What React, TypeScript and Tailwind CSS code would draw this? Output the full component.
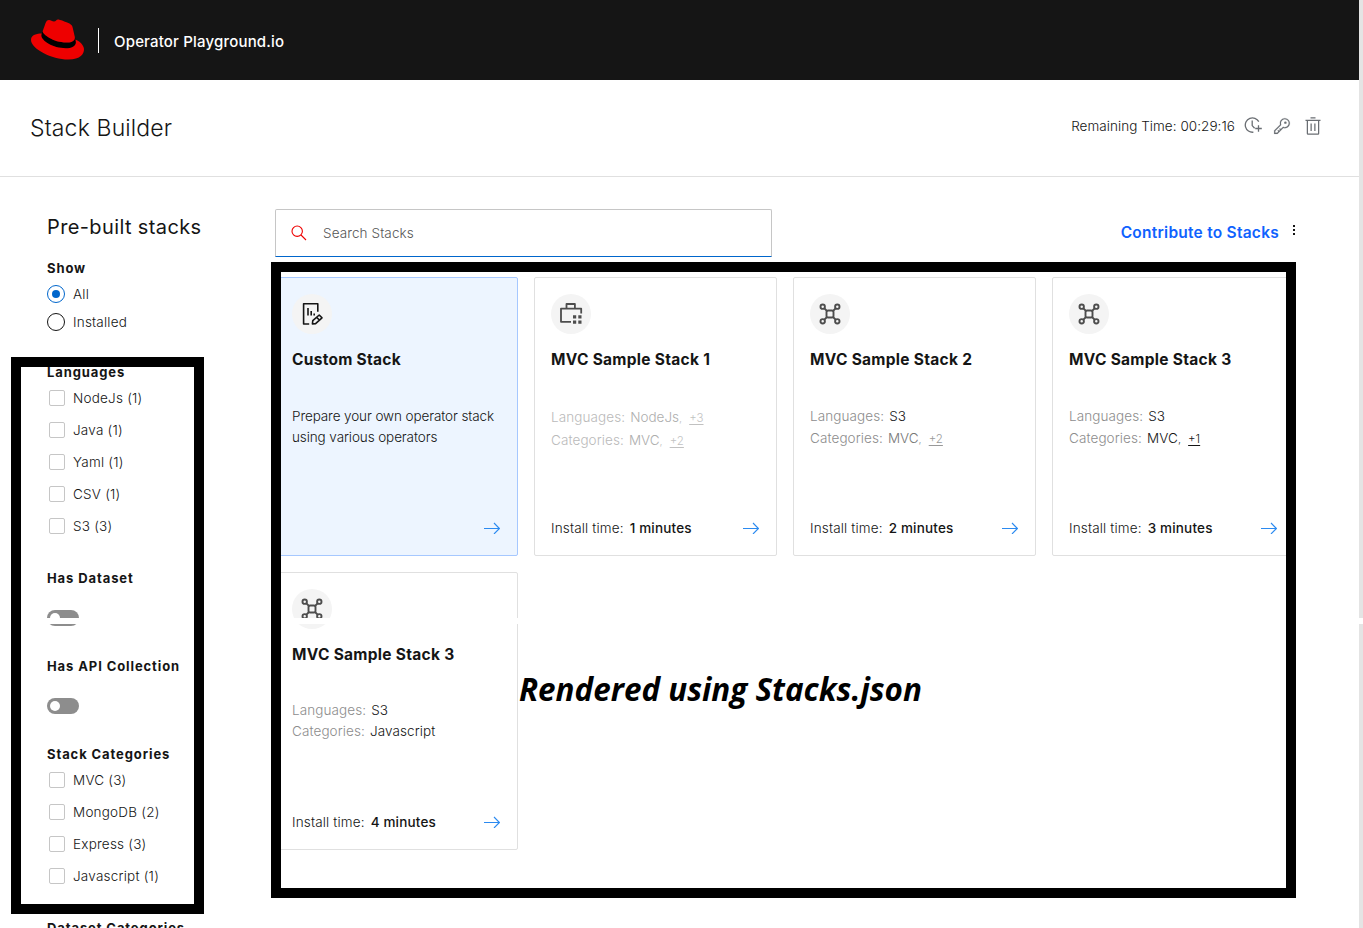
import React from "react";

const languages = ["NodeJs (1)", "Java (1)", "Yaml (1)", "CSV (1)", "S3 (3)"];
const categories = ["MVC (3)", "MongoDB (2)", "Express (3)", "Javascript (1)"];

function RedHat() {
  return (
    <svg className="h-[53px] w-[53px]" viewBox="0 0 24 24">
      <path
        fill="#000"
        d="M20.11 11.951c.218 1.032.218 1.14.218 1.277 0 1.765-1.984 2.745-4.593 2.745-5.895.004-11.06-3.451-11.06-5.734a2.326 2.326 0 0 1 .19-.925l.46-1.15a.81.81 0 0 0-.028.245c0 1.162 4.577 4.974 10.71 4.974 1.577 0 3.86-.326 3.86-2.202a1.765 1.765 0 0 0-.04-.431z"
      />
      <path
        fill="#e00"
        d="M16.009 13.386c1.577 0 3.86-.326 3.86-2.202a1.765 1.765 0 0 0-.04-.431l-.94-4.08c-.216-.898-.406-1.305-1.982-2.093-1.223-.625-3.888-1.658-4.676-1.658-.733 0-.947.946-1.822.946-.842 0-1.467-.706-2.255-.706-.757 0-1.25.515-1.63 1.576 0 0-1.06 2.99-1.197 3.424a.81.81 0 0 0-.028.245c0 1.162 4.577 4.974 10.71 4.974m4.101-1.435c.218 1.032.218 1.14.218 1.277 0 1.765-1.984 2.745-4.593 2.745-5.895.004-11.06-3.451-11.06-5.734a2.326 2.326 0 0 1 .19-.925C2.746 9.415 0 9.794 0 12.217c0 3.969 9.405 8.861 16.851 8.861 5.71 0 7.149-2.582 7.149-4.62 0-1.605-1.387-3.425-3.887-4.512"
      />
    </svg>
  );
}

function ClockPlus() {
  return (
    <svg className="size-[18px]" viewBox="0 0 18 18" fill="none" stroke="#6a6e73" strokeWidth="1.3">
      <path d="M14.8 4.6A7.2 7.2 0 1 0 9.4 15.2M8.2 3.6v5l2.4 2.6M14.5 8.2v6.6M11.2 11.5h6.6" />
    </svg>
  );
}

function Key() {
  return (
    <svg className="size-[18px]" viewBox="0 0 32 32" fill="#6a6e73">
      <path
        stroke="#6a6e73"
        strokeWidth="0.3"
        d="M21 2a8.998 8.998 0 0 0-8.612 11.612L2 24v6h6l10.388-10.388A9 9 0 1 0 21 2zm0 16a7.013 7.013 0 0 1-2.032-.302l-1.147-.348-.847.847-3.181 3.181L12.414 20 11 21.414l1.379 1.379-1.586 1.586L9.414 23 8 24.414l1.379 1.379L7.172 28H4v-3.172l9.802-9.802.848-.847-.348-1.147A7 7 0 1 1 21 18z"
      />
      <circle cx="22" cy="10" r="2.2" />
    </svg>
  );
}

function Trash() {
  return (
    <svg className="size-5" viewBox="0 0 32 32" fill="#6a6e73">
      <path d="M12 12h2v12h-2zM18 12h2v12h-2zM4 6v2h2v20a2 2 0 0 0 2 2h16a2 2 0 0 0 2-2V8h2V6zm4 22V8h16v20zM12 2h8v2h-8z" />
    </svg>
  );
}

function Arrow() {
  return (
    <svg className="mr-px h-3 w-4" viewBox="0 0 16 12" fill="none" stroke="#2b8af0" strokeWidth="1.1">
      <path d="M0 6.5h15.3M10 1l5.4 5.5L10 12" />
    </svg>
  );
}

function EditIcon() {
  return (
    <svg className="size-6" viewBox="0 0 24 24" fill="none" stroke="#151515" strokeWidth="1.6">
      <path d="M17.8 9.8V1.8H3.6v20.2h5.6" strokeLinejoin="round" />
      <path d="M8 6v7.4M11.2 9v4.4M14.2 11.4v2" />
      <path d="m12.4 22 .4-3.4 6.4-5.6 2.8 2.8-6.4 5.8zM16.6 15.4l2.8 2.6" strokeLinejoin="round" />
    </svg>
  );
}

function CaseIcon() {
  return (
    <svg className="size-6" viewBox="0 0 24 24" fill="none" stroke="#4d4d4d" strokeWidth="1.8">
      <path d="M12 19.8H2V6.6h20.2v4.9M7.5 6.6V2h8.4v4.6" strokeLinejoin="round" />
      <path fill="#4d4d4d" stroke="none" d="M14 13.3h3.2v3.2H14zM19.3 13.3h3.2v3.2h-3.2zM14 18.6h3.2v3.2H14zM19.3 18.6h3.2v3.2h-3.2z" />
    </svg>
  );
}

function HubIcon() {
  return (
    <svg className="size-6" viewBox="0 0 24 24" fill="none" stroke="#4d4d4d" strokeWidth="1.9">
      <rect x="8.5" y="8.5" width="7" height="7" rx="1.8" />
      <circle cx="4.7" cy="4.7" r="2.2" />
      <circle cx="19.3" cy="4.7" r="2.2" />
      <circle cx="4.7" cy="19.3" r="2.2" />
      <circle cx="19.3" cy="19.3" r="2.2" />
      <path d="m6.4 6.4 2.6 2.6M17.6 6.4 15 9M6.4 17.6 9 15M17.6 17.6 15 15" />
    </svg>
  );
}

function Heading({ children }: { children: React.ReactNode }) {
  return <h3 className="h-5 text-[13px] leading-5 font-bold tracking-[0.9px] whitespace-nowrap text-[#151515]">{children}</h3>;
}

function CheckList({ items }: { items: string[] }) {
  return (
    <ul>
      {items.map((t) => (
        <li key={t} className="flex h-8 items-center gap-2 pl-[2px] text-[13.5px] font-light tracking-[0.22px] text-[#151515]">
          <span className="size-4 rounded-[2px] border border-[#c6c6c6] bg-white" />
          {t}
        </li>
      ))}
    </ul>
  );
}

function Toggle() {
  return (
    <div className="flex h-4 w-8 items-center rounded-full bg-[#8d8d8d] pl-[3px]">
      <span className="size-[10px] rounded-full bg-white" />
    </div>
  );
}

type Row = { value: string; more?: string; label: string; dim: boolean };

function Meta({ label, value, more, dim }: Row) {
  return (
    <div className="flex items-baseline gap-[5px] whitespace-nowrap">
      <span className="tracking-[0.1px] text-[#8d8d8d]">{label}</span>
      <span className={dim ? "text-[#777]" : "tracking-[0.1px] text-[#151515]"}>
        {value}
        {more && <span className={dim ? "text-[11px] text-[#999]" : "text-[11px] text-[#333]"}>,</span>}
      </span>
      {more && (
        <span className={dim ? "ml-[2px] text-[11.5px] text-[#999] underline underline-offset-2" : "ml-[2px] text-[11.5px] text-[#151515] underline underline-offset-2"}>
          {more}
        </span>
      )}
    </div>
  );
}

type CardProps = {
  title: string;
  icon: React.ReactNode;
  minutes?: string;
  selected?: boolean;
  rows?: Row[];
  bodyClass: string;
  sizeClass: string;
};

function Card({ title, icon, minutes, selected, rows, bodyClass, sizeClass }: CardProps) {
  return (
    <article
      className={`flex w-[243px] flex-col rounded-[2px] border px-4 pt-4 ${sizeClass} ${selected ? "border-[#a6c8ff] bg-[#edf5ff]" : "border-[#e0e0e0] bg-white"}`}
    >
      <div className="flex size-10 shrink-0 items-center justify-center rounded-full bg-[#f4f4f4]">{icon}</div>
      <h2 className="mt-4 h-5 text-[15.5px] leading-5 font-bold tracking-[0.28px] whitespace-nowrap text-[#151515]">{title}</h2>
      <div className={`flex-1 text-[13.5px] font-light ${bodyClass}`}>
        {rows ? rows.map((r) => <Meta key={r.label} {...r} />) : (
          <p className="tracking-[-0.1px] whitespace-nowrap text-[#151515]">
            Prepare your own operator stack
            <br />
            using various operators
          </p>
        )}
      </div>
      <div className="mb-[17px] flex h-5 items-center justify-between text-[13.5px] leading-5 text-[#151515]">
        <span className="flex gap-[6px] whitespace-nowrap">
          {minutes && (
            <>
              <span className="font-light tracking-[0.15px]">Install time:</span>
              <span className="font-medium tracking-[0.18px]">{minutes}</span>
            </>
          )}
        </span>
        <Arrow />
      </div>
    </article>
  );
}

export default function App() {
  return (
    <div className="relative flex h-[928px] w-[1363px] overflow-hidden bg-white font-['Inter','Liberation_Sans',sans-serif]">
      <div className="flex w-[1359px] flex-col">
        <header className="flex h-20 shrink-0 items-center bg-[#151515] pl-[31px]">
          <div className="-mt-[2px]">
            <RedHat />
          </div>
          <div className="mt-[1px] ml-[14px] h-[25px] w-px bg-white" />
          <span className="mt-[4px] ml-[15px] text-[15px] font-medium tracking-[0.18px] whitespace-nowrap text-white">Operator Playground.io</span>
        </header>
        <div className="flex h-[97px] shrink-0 items-center justify-between border-b border-[#e0e0e0] pr-[36px] pl-[30px]">
          <h1 className="text-[23px] font-light tracking-[0.15px] whitespace-nowrap text-[#151515]">Stack Builder</h1>
          <div className="-mt-[4px] flex items-center">
            <span className="mr-[9px] text-[13.5px] font-light tracking-[0.05px] whitespace-nowrap text-[#151515]">Remaining Time: 00:29:16</span>
            <ClockPlus />
            <span className="ml-[11px] flex">
              <Key />
            </span>
            <span className="ml-[12px] flex">
              <Trash />
            </span>
          </div>
        </div>
        <div className="flex">
          <aside className="w-[275px] shrink-0 pt-[37px] pl-[47px]">
            <h2 className="h-[26px] text-[20px] leading-[26px] font-normal tracking-[0.38px] whitespace-nowrap text-[#151515]">Pre-built stacks</h2>
            <div className="mt-[18px]">
              <Heading>Show</Heading>
            </div>
            <div className="mt-[2px] flex flex-col text-[13.5px] font-light tracking-[0.2px] text-[#151515]">
              <div className="flex h-7 items-center gap-2">
                <span className="flex size-[18px] items-center justify-center rounded-full border border-[#06c]">
                  <span className="size-2 rounded-full bg-[#06c]" />
                </span>
                All
              </div>
              <div className="flex h-7 items-center gap-2">
                <span className="size-[18px] rounded-full border border-[#151515]" />
                Installed
              </div>
            </div>
            <div className="mt-[26px]">
              <Heading>Languages</Heading>
            </div>
            <CheckList items={languages} />
            <div className="mt-[26px] mb-[22px]">
              <Heading>Has Dataset</Heading>
            </div>
            <Toggle />
            <div className="mt-[30px] mb-[22px]">
              <Heading>Has API Collection</Heading>
            </div>
            <Toggle />
            <div className="mt-[30px]">
              <Heading>Stack Categories</Heading>
            </div>
            <CheckList items={categories} />
            <div className="mt-[26px]">
              <Heading>Dataset Categories</Heading>
            </div>
          </aside>
          <main className="w-[1021px] shrink-0 pt-8">
            <div className="flex justify-between">
              <div className="flex h-12 w-[497px] items-center rounded-t-[2px] border border-[#c6c6c6] border-b-[#06c] pl-[15px]">
                <svg className="size-4" viewBox="0 0 16 16" fill="none" stroke="#e00" strokeWidth="1.1">
                  <circle cx="6.2" cy="6.2" r="5.2" />
                  <path d="m10 10 5 5" />
                </svg>
                <span className="ml-4 text-[13.5px] font-light tracking-[0.1px] text-[#555]">Search Stacks</span>
              </div>
              <div className="flex">
                <a className="mt-[14px] text-[15.5px] leading-5 font-semibold tracking-[0.25px] whitespace-nowrap text-[#0f62fe]">Contribute to Stacks</a>
                <div className="mt-4 mr-px ml-[14px] flex h-[10px] flex-col justify-between">
                  <span className="size-[2px] bg-[#151515]" />
                  <span className="size-[2px] bg-[#151515]" />
                  <span className="size-[2px] bg-[#151515]" />
                </div>
              </div>
            </div>
            <section className="mt-5 grid grid-cols-[repeat(4,243px)] gap-4">
              <Card title="Custom Stack" icon={<EditIcon />} selected bodyClass="mt-[36px] leading-[21px]" sizeClass="h-[279px]" />
              <Card
                title="MVC Sample Stack 1"
                icon={<CaseIcon />}
                minutes="1 minutes"
                bodyClass="mt-[36px] leading-[22px] opacity-60"
                sizeClass="h-[279px]"
                rows={[
                  { label: "Languages:", value: "NodeJs", more: "+3", dim: true },
                  { label: "Categories:", value: "MVC", more: "+2", dim: true },
                ]}
              />
              <Card
                title="MVC Sample Stack 2"
                icon={<HubIcon />}
                minutes="2 minutes"
                bodyClass="mt-[35px] leading-[22px]"
                sizeClass="h-[279px]"
                rows={[
                  { label: "Languages:", value: "S3", dim: false },
                  { label: "Categories:", value: "MVC", more: "+2", dim: true },
                ]}
              />
              <Card
                title="MVC Sample Stack 3"
                icon={<HubIcon />}
                minutes="3 minutes"
                bodyClass="mt-[35px] leading-[22px]"
                sizeClass="h-[279px]"
                rows={[
                  { label: "Languages:", value: "S3", dim: false },
                  { label: "Categories:", value: "MVC", more: "+1", dim: false },
                ]}
              />
              <Card
                title="MVC Sample Stack 3"
                icon={<HubIcon />}
                minutes="4 minutes"
                bodyClass="mt-[35px] leading-[21px]"
                sizeClass="h-[278px]"
                rows={[
                  { label: "Languages:", value: "S3", dim: false },
                  { label: "Categories:", value: "Javascript", dim: false },
                ]}
              />
            </section>
          </main>
        </div>
      </div>
      <div className="w-1 bg-[#e4e4e4]" />

      <div className="absolute top-[618px] left-0 h-[6px] w-full bg-white" />
      <div className="absolute top-[357px] left-[11px] h-[557px] w-[193px] border-[10px] border-black" />
      <div className="absolute top-[262px] left-[271px] h-[636px] w-[1025px] border-[10px] border-black" />
      <div className="absolute top-[667px] left-[519px] font-['Open_Sans',sans-serif] text-[31.4px] leading-[44px] font-bold whitespace-nowrap text-black italic">
        Rendered using Stacks.json
      </div>
    </div>
  );
}
